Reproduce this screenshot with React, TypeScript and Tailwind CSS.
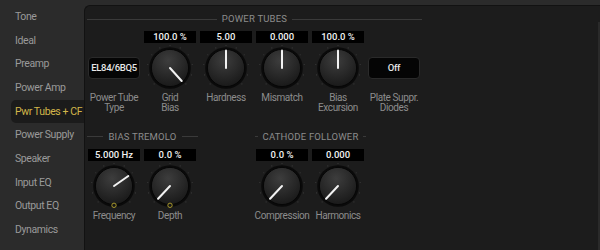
import React from "react";

const NAV = [
  "Tone",
  "Ideal",
  "Preamp",
  "Power Amp",
  "Pwr Tubes + CF",
  "Power Supply",
  "Speaker",
  "Input EQ",
  "Output EQ",
  "Dynamics",
];

function Knob({ angle, dot }: { angle: number; dot?: boolean }) {
  const rad = (angle * Math.PI) / 180;
  const x2 = 24 + 17.5 * Math.sin(rad);
  const y2 = 24 - 17.5 * Math.cos(rad);
  const ticks = [];
  for (let i = 0; i <= 10; i++) {
    const a = ((-135 + i * 27) * Math.PI) / 180;
    ticks.push(
      <circle
        key={i}
        cx={24 + 22.5 * Math.sin(a)}
        cy={24 - 22.5 * Math.cos(a)}
        r={0.6}
        fill="#3a3a3a"
      />
    );
  }
  return (
    <svg width="48" height="48" viewBox="0 0 48 48">
      <defs>
        <radialGradient id="kg" cx="45%" cy="30%" r="75%">
          <stop offset="0" stopColor="#3d3d3d" />
          <stop offset="1" stopColor="#171717" />
        </radialGradient>
      </defs>
      {ticks}
      <circle cx="24" cy="24" r="20.8" fill="#0a0a0a" />
      <circle cx="24" cy="24" r="18.6" fill="url(#kg)" stroke="#060606" strokeWidth="1" />
      <line x1="24" y1="24" x2={x2} y2={y2} stroke="#f2f2f2" strokeWidth="2" strokeLinecap="round" />
      {dot && <circle cx="24" cy="43.3" r="2.2" fill="#161616" stroke="#a8982c" strokeWidth="1" />}
    </svg>
  );
}

function Btn({ text }: { text: string }) {
  return (
    <div className="w-[52px] h-[22px] rounded-[4px] bg-[#050505] border border-[#2a2a2a] flex items-center justify-center text-[9.5px] tracking-[-0.3px] text-[#e8e8e8] font-medium whitespace-nowrap">
      {text}
    </div>
  );
}

function Col({
  value,
  children,
  label,
}: {
  value?: string;
  children: React.ReactNode;
  label: string[];
}) {
  return (
    <div className="w-[56px] flex flex-col items-center">
      {value ? (
        <div className="h-[12px] w-[52px] bg-black flex items-center justify-center text-[9.5px] font-medium text-[#f2f2f2] leading-none">
          {value}
        </div>
      ) : (
        <div className="h-[12px]" />
      )}
      <div className="h-[48px] w-[56px] mt-[1px] flex items-center justify-center">{children}</div>
      <div className="mt-[1px] text-[10px] tracking-[-0.4px] leading-[9.6px] text-center text-[#8c8c8c] whitespace-nowrap">
        {label.map((l) => (
          <div key={l}>{l}</div>
        ))}
      </div>
    </div>
  );
}

function Title({ text }: { text: string }) {
  return (
    <div className="h-[14px] flex items-center gap-[5px] pl-[1px]">
      <div className="flex-1 h-px bg-[#3a3a3a]" />
      <span className="text-[9.5px] tracking-[0.2px] text-[#8c8c8c] leading-none">{text}</span>
      <div className="flex-1 h-px bg-[#3a3a3a]" />
    </div>
  );
}

export default function App() {
  return (
    <div className="w-[600px] h-[250px] bg-[#2b2b2b] flex overflow-hidden font-['Roboto','Liberation_Sans',sans-serif]">
      <nav className="w-[84px] shrink-0 pt-[5px] flex flex-col">
        {NAV.map((n) => {
          const sel = n === "Pwr Tubes + CF";
          return (
            <div
              key={n}
              className={
                sel
                  ? "h-[23.67px] ml-[11px] pl-[4px] flex items-center text-[10.5px] tracking-[-0.4px] rounded-l-[5px] bg-[#1b1b1b] text-[#d2b64a] whitespace-nowrap"
                  : "h-[23.67px] ml-[11px] pl-[4px] flex items-center text-[10.5px] tracking-[-0.4px] text-[#9a9a9a] whitespace-nowrap"
              }
            >
              {n}
            </div>
          );
        })}
      </nav>
      <div className="flex-1 mt-[5px] bg-[#1c1c1c] border-l border-t border-[#121212] rounded-tl-[6px] flex">
        <div className="flex-1 pl-[1px] pt-[6px]">
          <div className="w-[336px]">
            <Title text="POWER TUBES" />
            <div className="flex mt-[5px]">
              <Col label={["Power Tube", "Type"]}>
                <Btn text="EL84/6BQ5" />
              </Col>
              <Col value="100.0 %" label={["Grid", "Bias"]}>
                <Knob angle={138} />
              </Col>
              <Col value="5.00" label={["Hardness"]}>
                <Knob angle={0} />
              </Col>
              <Col value="0.000" label={["Mismatch"]}>
                <Knob angle={0} />
              </Col>
              <Col value="100.0 %" label={["Bias", "Excursion"]}>
                <Knob angle={0} />
              </Col>
              <Col label={["Plate Suppr.", "Diodes"]}>
                <Btn text="Off" />
              </Col>
            </div>
          </div>
          <div className="flex mt-[17.8px]">
            <div className="w-[112px]">
              <Title text="BIAS TREMOLO" />
              <div className="flex mt-[5px]">
                <Col value="5.000 Hz" label={["Frequency"]}>
                  <Knob angle={55} dot />
                </Col>
                <Col value="0.0 %" label={["Depth"]}>
                  <Knob angle={-137} dot />
                </Col>
              </div>
            </div>
            <div className="w-[112px] ml-[56px]">
              <Title text="CATHODE FOLLOWER" />
              <div className="flex mt-[5px]">
                <Col value="0.0 %" label={["Compression"]}>
                  <Knob angle={-137} />
                </Col>
                <Col value="0.000" label={["Harmonics"]}>
                  <Knob angle={-137} />
                </Col>
              </div>
            </div>
          </div>
        </div>
        <div className="w-[2px] mt-[16px] bg-[#2a2a2a]" />
      </div>
    </div>
  );
}
